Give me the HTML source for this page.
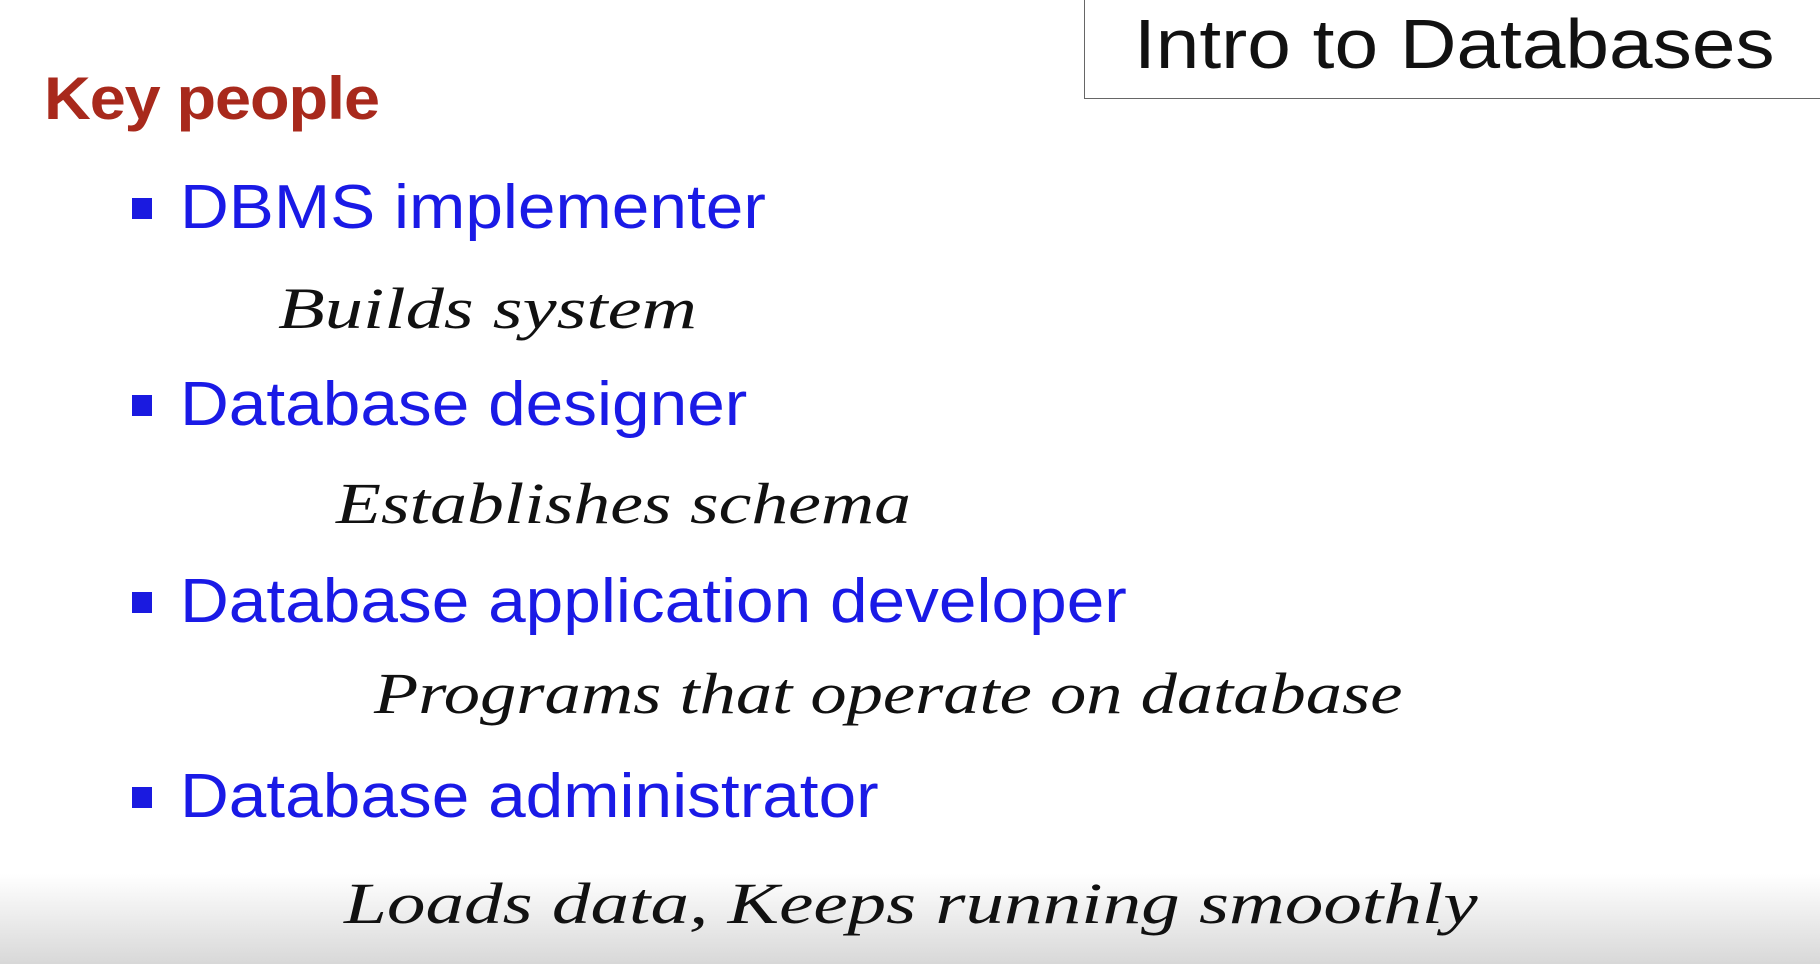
<!DOCTYPE html>
<html><head><meta charset="utf-8"><style>
html,body{margin:0;padding:0}
body{width:1820px;height:964px;position:relative;overflow:hidden;background:#fff;font-family:"Liberation Sans",sans-serif}
.box{position:absolute;left:1084px;top:-2px;width:760px;height:101px;border:1.5px solid #666;box-sizing:border-box;background:#fff}
.t{position:absolute;white-space:nowrap}
.title{left:1134px;top:4px;font-size:70px;color:#111;transform:scaleX(1.12);transform-origin:left}
.key{left:44px;top:64px;font-size:60px;font-weight:bold;color:#a8291c;transform:scaleX(1.08);transform-origin:left;letter-spacing:-1px}
.b{position:absolute;left:132px;width:20px;height:21px;background:#1a1ae0}
.it{left:180px;font-size:62px;color:#1a1ae6;transform:scaleX(1.09);transform-origin:left}
.hw{font-family:"Liberation Serif",serif;font-style:italic;font-size:58px;color:#111;transform-origin:left}
.fade{position:absolute;left:0;right:0;bottom:0;height:90px;background:linear-gradient(#fff,#d8d8d8)}
</style></head><body>
<div class="fade"></div>
<div class="box"></div>
<div class="t title">Intro to Databases</div>
<div class="t key">Key people</div>
<div class="b" style="top:198px"></div><div class="t it" style="top:172px">DBMS implementer</div>
<div class="t hw" style="left:278px;top:275px;transform:scaleX(1.32)">Builds system</div>
<div class="b" style="top:395px"></div><div class="t it" style="top:369px">Database designer</div>
<div class="t hw" style="left:336px;top:470px;transform:scaleX(1.27)">Establishes schema</div>
<div class="b" style="top:592px"></div><div class="t it" style="top:566px">Database application developer</div>
<div class="t hw" style="left:374px;top:660px;transform:scaleX(1.25)">Programs that operate on database</div>
<div class="b" style="top:787px"></div><div class="t it" style="top:761px">Database administrator</div>
<div class="t hw" style="left:344px;top:870px;transform:scaleX(1.33)">Loads data, Keeps running smoothly</div>
</body></html>
